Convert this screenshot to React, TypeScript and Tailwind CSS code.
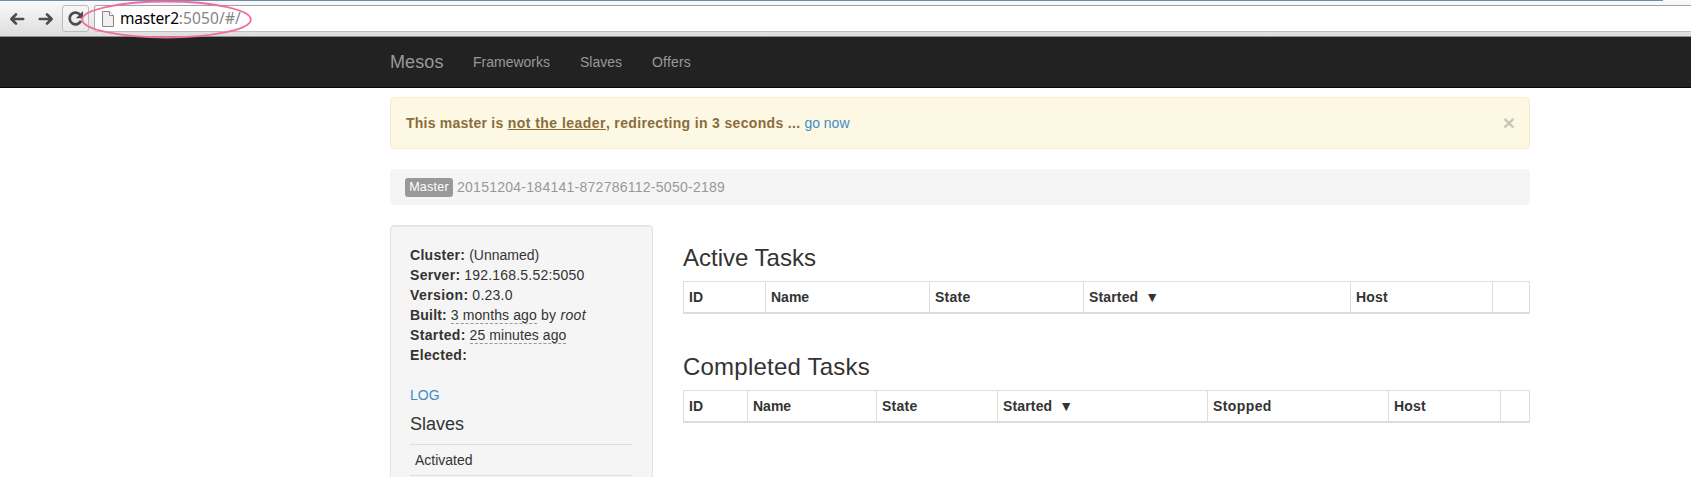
import React from "react";

type Column = { label: string; cell: string; sorted?: boolean };

const activeColumns: Column[] = [
  { label: "ID", cell: "w-[82px]" },
  { label: "Name", cell: "w-[164px]" },
  { label: "State", cell: "w-[154px] tracking-[0.25px]" },
  { label: "Started", cell: "w-[267px] tracking-[0.15px]", sorted: true },
  { label: "Host", cell: "w-[142px] tracking-[0.2px]" },
  { label: "", cell: "w-[37px]" },
];

const completedColumns: Column[] = [
  { label: "ID", cell: "w-[64px]" },
  { label: "Name", cell: "w-[129px]" },
  { label: "State", cell: "w-[121px] tracking-[0.25px]" },
  { label: "Started", cell: "w-[210px] tracking-[0.15px]", sorted: true },
  { label: "Stopped", cell: "w-[181px] tracking-[0.4px]" },
  { label: "Host", cell: "w-[112px] tracking-[0.2px]" },
  { label: "", cell: "w-[29px]" },
];

function TaskTable({ title, columns }: { title: React.ReactNode; columns: Column[] }) {
  return (
    <section>
      <h2 className="h-[26px] whitespace-nowrap text-[24px] leading-[26px]">{title}</h2>
      <div className="mt-[10px] flex h-[33px] w-[847px] border-t border-r border-b-2 border-[#ddd]">
        {columns.map((c, i) => (
          <div
            key={i}
            className={`${c.cell} shrink-0 border-l border-[#ddd] pl-[5px] pt-[5px] text-[14px] leading-[20px] font-bold whitespace-pre`}
          >
            {c.label}
            {c.sorted && <span className="ml-[7px]">▼</span>}
          </div>
        ))}
      </div>
    </section>
  );
}

function Arrow({ flip }: { flip?: boolean }) {
  return (
    <svg width="16" height="14" viewBox="0 0 16 14" className={flip ? "-scale-x-100" : ""}>
      <path
        d="M7 2.4 2.4 7 7 11.6M2.8 7H14.2"
        fill="none"
        stroke="#4d4d4d"
        strokeWidth="2.7"
        strokeLinecap="round"
        strokeLinejoin="round"
      />
    </svg>
  );
}

function Toolbar() {
  return (
    <header className="relative flex h-[37px] w-full border-b border-[#8d8f8e] bg-linear-to-b from-[#fafafa] to-[#dedede]">
      <div className="absolute top-0 left-0 h-px w-[1663px] bg-[#6d8cb8]" />
      <div className="flex h-[36px] w-[94px] shrink-0 items-center pt-px pl-[9px]">
        <Arrow />
        <div className="ml-[13px] flex">
          <Arrow flip />
        </div>
        <div className="ml-[8px] flex h-[27px] w-[27px] items-center justify-center rounded-[3px] border border-[#bcbcbc] bg-linear-to-b from-[#f7f7f7] to-[#e9e9e9]">
          <svg width="17" height="17" viewBox="0 0 17 17">
            <path d="M13.4 5A5.9 5.9 0 1 0 14 10.8" fill="none" stroke="#4d4d4d" strokeWidth="2.7" />
            <path d="M16 1v7.2H8.8z" fill="#4d4d4d" />
          </svg>
        </div>
      </div>
      <div className="mt-[5px] flex h-[27px] grow items-center rounded-l-[3px] border-t border-b border-l border-t-[#a3a0a2] border-b-[#c0c0c0] border-l-[#aaa] bg-white pl-[7px]">
        <svg width="12" height="16" viewBox="0 0 12 16">
          <path d="M.5.5H7.5L11.5 4.5V15.5H.5z" fill="#f0f0f0" stroke="#888" strokeWidth="1" />
          <path d="M7.5.5V4.5h4" fill="#fff" stroke="#888" strokeWidth="1" />
        </svg>
        <div className="-mt-px ml-[6px] whitespace-nowrap font-['Noto_Sans',sans-serif] text-[15.5px] leading-[22px] tracking-[0.12px] text-[#858585]">
          <span className="tracking-[-0.2px] text-black">master2</span>:5050/#/
        </div>
      </div>
      <svg className="absolute top-0 left-[80px] z-10" width="174" height="40" viewBox="0 0 174 40">
        <ellipse cx="86.5" cy="19.5" rx="84.3" ry="18" fill="none" stroke="#f36b9c" strokeWidth="1.8" />
      </svg>
    </header>
  );
}

export default function App() {
  return (
    <div className="h-[477px] w-[1691px] overflow-hidden bg-white font-['Liberation_Sans',Arial,sans-serif] text-[14px] leading-[20px] text-[#333]">
      <Toolbar />
      <nav className="flex h-[51px] items-center border-b border-[#080808] bg-[#222] pl-[390px] text-[#999]">
        <span className="w-[83px] text-[18px] tracking-[0.1px]">Mesos</span>
        <span className="w-[107px]">Frameworks</span>
        <span className="w-[72px]">Slaves</span>
        <span className="tracking-[0.2px]">Offers</span>
      </nav>
      <main className="ml-[390px] w-[1140px]">
        <div className="mt-[9px] flex h-[52px] items-center justify-between rounded-[4px] border border-[#faebcc] bg-[#fcf8e3] pr-[14px] pl-[15px] text-[#8a6d3b]">
          <div className="whitespace-nowrap">
            <b className="tracking-[0.34px]">
              <span className="tracking-[0.24px]">This master is </span>
              <span className="tracking-[0.46px] underline">not the leader</span>, redirecting in 3 seconds ...
            </b>{" "}
            <a className="text-[#428bca]">go now</a>
          </div>
          <span className="text-[21px] leading-[20px] font-bold text-[#cac6b6]">×</span>
        </div>
        <div className="mt-[20px] flex h-[36px] items-center rounded-[4px] bg-[#f5f5f5] pl-[15px] text-[#999]">
          <span className="flex h-[19px] w-[48px] items-center justify-center rounded-[3px] bg-[#999] text-[12.6px] leading-[19px] tracking-[0.2px] text-white">
            Master
          </span>
          <span className="ml-[4px] tracking-[0.26px]">20151204-184141-872786112-5050-2189</span>
        </div>
        <div className="mt-[20px] flex">
          <aside className="h-[300px] w-[263px] shrink-0 rounded-[4px] border border-[#e3e3e3] bg-[#f5f5f5] px-[19px] pt-[19px] shadow-[inset_0_1px_1px_rgba(0,0,0,0.05)]">
            <div><b className="tracking-[0.3px]">Cluster:</b> <span>(Unnamed)</span></div>
            <div><b className="tracking-[0.3px]">Server:</b> <span className="tracking-[0.2px]">192.168.5.52:5050</span></div>
            <div><b className="tracking-[0.4px]">Version:</b> <span className="tracking-[0.25px]">0.23.0</span></div>
            <div>
              <b className="tracking-[0.2px]">Built:</b>{" "}
              <span className="border-b border-dashed border-[#999] tracking-[0.09px]">3 months ago</span>
              <span className="tracking-[0.3px]"> by <i>root</i></span>
            </div>
            <div>
              <b className="tracking-[0.35px]">Started:</b>{" "}
              <span className="border-b border-dashed border-[#999] tracking-[0.08px]">25 minutes ago</span>
            </div>
            <div><b className="tracking-[0.35px]">Elected:</b></div>
            <div className="mt-[20px] text-[#428bca]">LOG</div>
            <h3 className="mt-[9px] text-[18px] leading-[20px]">Slaves</h3>
            <div className="mt-[10px] h-[31px] w-[222px] border-t border-[#ddd] pt-[5px] pl-[5px]">Activated</div>
            <div className="h-[31px] w-[222px] border-t border-[#ddd]" />
          </aside>
          <div className="ml-[30px] flex flex-col gap-[40px] pt-[20px]">
            <TaskTable title="Active Tasks" columns={activeColumns} />
            <TaskTable title={<span className="tracking-[0.22px]">Completed Tasks</span>} columns={completedColumns} />
          </div>
        </div>
      </main>
    </div>
  );
}
